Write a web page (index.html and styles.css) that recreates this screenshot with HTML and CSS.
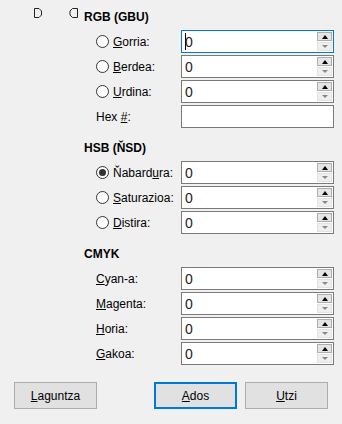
FILE: index.html
```html
<!DOCTYPE html>
<html lang="eu">
<head>
    <meta charset="UTF-8">
    <meta name="viewport" content="width=device-width, initial-scale=1.0">
    <title>Kolorea hautatu</title>
    <link rel="stylesheet" href="styles.css">
</head>
<body>
    <div class="dialog">
        <div class="preview">
            <svg class="marker" width="9" height="10" viewBox="0 0 9 10">
                <polygon points="0.5,0.5 5,0.5 7.5,3 7.5,7 5,9.5 0.5,9.5" />
            </svg>
            <svg class="marker" width="10" height="10" viewBox="0 0 10 10">
                <polygon points="3.5,0.5 8.5,0.5 8.5,9.5 3.5,9.5 1,7 1,3" />
            </svg>
        </div>

        <div class="panel">
            <div class="section">
                <div class="section-title">RGB (GBU)</div>
                <div class="row">
                    <label class="label"><span class="radio"></span><span><u>G</u>orria:</span></label>
                    <div class="field focused">
                        <span class="value"><span class="caret"></span>0</span>
                        <div class="spin"><span class="up"></span><span class="down"></span></div>
                    </div>
                </div>
                <div class="row">
                    <label class="label"><span class="radio"></span><span><u>B</u>erdea:</span></label>
                    <div class="field">
                        <span class="value">0</span>
                        <div class="spin"><span class="up"></span><span class="down"></span></div>
                    </div>
                </div>
                <div class="row">
                    <label class="label"><span class="radio"></span><span><u>U</u>rdina:</span></label>
                    <div class="field">
                        <span class="value">0</span>
                        <div class="spin"><span class="up"></span><span class="down"></span></div>
                    </div>
                </div>
                <div class="row">
                    <label class="label"><span>Hex <u>#</u>:</span></label>
                    <div class="field">
                        <span class="value"></span>
                    </div>
                </div>
            </div>

            <div class="section">
                <div class="section-title">HSB (ŇSD)</div>
                <div class="row">
                    <label class="label"><span class="radio checked"></span><span>Ňabard<u>u</u>ra:</span></label>
                    <div class="field">
                        <span class="value">0</span>
                        <div class="spin"><span class="up"></span><span class="down"></span></div>
                    </div>
                </div>
                <div class="row">
                    <label class="label"><span class="radio"></span><span><u>S</u>aturazioa:</span></label>
                    <div class="field">
                        <span class="value">0</span>
                        <div class="spin"><span class="up"></span><span class="down"></span></div>
                    </div>
                </div>
                <div class="row">
                    <label class="label"><span class="radio"></span><span><u>D</u>istira:</span></label>
                    <div class="field">
                        <span class="value">0</span>
                        <div class="spin"><span class="up"></span><span class="down"></span></div>
                    </div>
                </div>
            </div>

            <div class="section">
                <div class="section-title">CMYK</div>
                <div class="row">
                    <label class="label"><span><u>C</u>yan-a:</span></label>
                    <div class="field">
                        <span class="value">0</span>
                        <div class="spin"><span class="up"></span><span class="down"></span></div>
                    </div>
                </div>
                <div class="row">
                    <label class="label"><span><u>M</u>agenta:</span></label>
                    <div class="field">
                        <span class="value">0</span>
                        <div class="spin"><span class="up"></span><span class="down"></span></div>
                    </div>
                </div>
                <div class="row">
                    <label class="label"><span><u>H</u>oria:</span></label>
                    <div class="field">
                        <span class="value">0</span>
                        <div class="spin"><span class="up"></span><span class="down"></span></div>
                    </div>
                </div>
                <div class="row">
                    <label class="label"><span><u>G</u>akoa:</span></label>
                    <div class="field">
                        <span class="value">0</span>
                        <div class="spin"><span class="up"></span><span class="down"></span></div>
                    </div>
                </div>
            </div>
        </div>
    </div>

    <div class="buttons">
        <button class="btn"><u>L</u>aguntza</button>
        <div class="btn-group">
            <button class="btn default"><u>A</u>dos</button>
            <button class="btn"><u>U</u>tzi</button>
        </div>
    </div>
</body>
</html>
```

FILE: styles.css
```css
body {
    margin: 0;
    background-color: #f0f0f0;
    color: #000;
    font-family: "Liberation Sans", Arial, sans-serif;
    font-size: 12px;
}
.dialog {
    display: flex;
}
.preview {
    width: 84px;
    box-sizing: border-box;
    padding: 8px 0 0 34px;
    display: flex;
    align-items: flex-start;
    gap: 26px;
}
.marker polygon {
    fill: none;
    stroke: #222;
    stroke-width: 1;
}
.panel {
    flex: 1;
    padding: 9px 8px 0 0;
}
.section {
    display: flex;
    flex-direction: column;
    gap: 2px;
    margin-bottom: 12px;
}
.section:last-child {
    margin-bottom: 0;
}
.section-title {
    font-weight: bold;
    height: 16px;
    line-height: 16px;
    margin-bottom: 3px;
}
.row {
    display: flex;
    align-items: center;
    height: 23px;
}
.label {
    width: 97px;
    box-sizing: border-box;
    padding-left: 12px;
    display: flex;
    align-items: center;
    gap: 4px;
}
.radio {
    width: 13px;
    height: 13px;
    box-sizing: border-box;
    border: 1px solid #333;
    border-radius: 50%;
    background-color: #fff;
    display: flex;
    align-items: center;
    justify-content: center;
}
.radio.checked::after {
    content: "";
    width: 7px;
    height: 7px;
    border-radius: 50%;
    background-color: #333;
}
.field {
    flex: 1;
    height: 23px;
    box-sizing: border-box;
    border: 1px solid #7a7a7a;
    background-color: #fff;
    display: flex;
    align-items: center;
    padding: 1px;
}
.field.focused {
    border-color: #0078d7;
}
.value {
    flex: 1;
    padding-left: 2px;
    font-size: 14px;
    color: #222;
    display: flex;
    align-items: center;
}
.caret {
    width: 0;
    height: 17px;
    border-left: 1px solid #000;
    margin-right: -1px;
}
.spin {
    width: 15px;
    height: 19px;
    display: flex;
    flex-direction: column;
    gap: 1px;
}
.spin span {
    flex: 1;
    box-sizing: border-box;
    display: flex;
    align-items: center;
    justify-content: center;
}
.spin .up {
    background-color: #e5e5e5;
    border: 1px solid #adadad;
}
.spin .down {
    background-color: #efefef;
    border: 1px solid #e3e3e3;
}
.spin .up::after,
.spin .down::after {
    content: "";
    width: 0;
    height: 0;
    border-left: 3px solid transparent;
    border-right: 3px solid transparent;
}
.spin .up::after {
    border-bottom: 4px solid #000;
}
.spin .down::after {
    border-top: 3px solid #888;
}
.buttons {
    display: flex;
    justify-content: space-between;
    padding: 0 14px;
    margin-top: 17px;
}
.btn-group {
    display: flex;
    gap: 8px;
}
.btn {
    width: 83px;
    height: 27px;
    box-sizing: border-box;
    background-color: #e1e1e1;
    border: 1px solid #adadad;
    font-family: "Liberation Sans", Arial, sans-serif;
    font-size: 12px;
    color: #000;
    padding: 0;
}
.btn.default {
    border: 2px solid #0078d7;
}
```
